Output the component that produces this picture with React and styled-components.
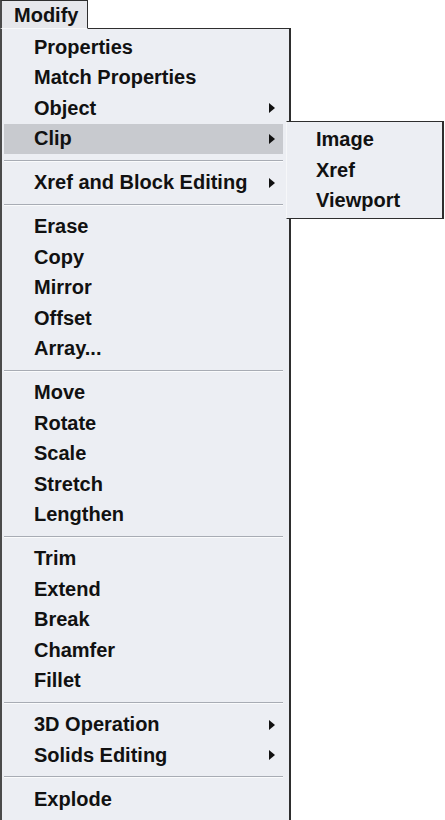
import React from "react";
import styled, { createGlobalStyle } from "styled-components";

const Global = createGlobalStyle`
  html, body { margin: 0; padding: 0; background: #ffffff; overflow: hidden; }
  body { font-family: "Liberation Sans", Arial, sans-serif; }
`;

const Page = styled.div`
  width: 445px;
  height: 820px;
  position: relative;
`;

const Tab = styled.div`
  position: relative;
  z-index: 2;
  width: 73px;
  height: 27px;
  margin-bottom: -1px;
  padding-left: 12px;
  background: #e6e7eb;
  border-top: 1px solid #2e2e2e;
  border-left: 2px solid #4a4a4a;
  border-right: 1px solid #2e2e2e;
  border-bottom: 1px solid #f7f8fa;
  font-size: 20px;
  font-weight: bold;
  line-height: 28px;
  color: #111;
`;

const Menu = styled.div`
  position: relative;
  width: 279px;
  background: #eceef3;
  border-top: 1px solid #2e2e2e;
  border-left: 2px solid #4a4a4a;
  border-right: 2px solid #2e2e2e;
  padding: 3px 6px 20px 2px;
  display: flex;
  flex-direction: column;
`;

const Row = styled.div`
  position: relative;
  height: 30.5px;
  display: flex;
  align-items: center;
  justify-content: space-between;
  padding: 0 8px 0 30px;
  background: ${(p) => (p.$active ? "#c8cacf" : "transparent")};
  font-size: 20px;
  font-weight: bold;
  color: #111;
  white-space: nowrap;
`;

const Arrow = styled.span`
  width: 0;
  height: 0;
  border-top: 5px solid transparent;
  border-bottom: 5px solid transparent;
  border-left: 6px solid #111;
`;

const Separator = styled.div`
  height: 13.5px;
  display: flex;
  flex-direction: column;
  justify-content: center;
  &::before {
    content: "";
    display: block;
    height: 1px;
    background: #a8acb4;
  }
  &::after {
    content: "";
    display: block;
    height: 1px;
    background: #fafbfc;
  }
`;

const Submenu = styled.div`
  position: absolute;
  z-index: 3;
  left: calc(100% + 3px);
  top: -3px;
  width: 155px;
  height: 93px;
  padding-top: 3px;
  background: #eceef3;
  border-top: 1px solid #2e2e2e;
  border-right: 2px solid #2e2e2e;
  border-bottom: 1px solid #2e2e2e;
  border-left: 1px solid #f6f7f9;
  display: flex;
  flex-direction: column;
`;

const SubRow = styled.div`
  height: 30.5px;
  display: flex;
  align-items: center;
  padding-left: 29px;
  font-size: 20px;
  font-weight: bold;
  color: #111;
`;

const groups = [
  [
    { label: "Properties" },
    { label: "Match Properties" },
    { label: "Object", sub: true },
    { label: "Clip", sub: true, active: true, items: ["Image", "Xref", "Viewport"] },
  ],
  [{ label: "Xref and Block Editing", sub: true }],
  [
    { label: "Erase" },
    { label: "Copy" },
    { label: "Mirror" },
    { label: "Offset" },
    { label: "Array..." },
  ],
  [
    { label: "Move" },
    { label: "Rotate" },
    { label: "Scale" },
    { label: "Stretch" },
    { label: "Lengthen" },
  ],
  [
    { label: "Trim" },
    { label: "Extend" },
    { label: "Break" },
    { label: "Chamfer" },
    { label: "Fillet" },
  ],
  [
    { label: "3D Operation", sub: true },
    { label: "Solids Editing", sub: true },
  ],
  [{ label: "Explode" }],
];

export default function App() {
  return (
    <Page>
      <Global />
      <Tab>Modify</Tab>
      <Menu>
        {groups.map((g, gi) => (
          <React.Fragment key={gi}>
            {gi > 0 && <Separator />}
            {g.map((it) => (
              <Row key={it.label} $active={it.active}>
                <span>{it.label}</span>
                {it.sub && <Arrow />}
                {it.items && (
                  <Submenu>
                    {it.items.map((s) => (
                      <SubRow key={s}>{s}</SubRow>
                    ))}
                  </Submenu>
                )}
              </Row>
            ))}
          </React.Fragment>
        ))}
      </Menu>
    </Page>
  );
}
